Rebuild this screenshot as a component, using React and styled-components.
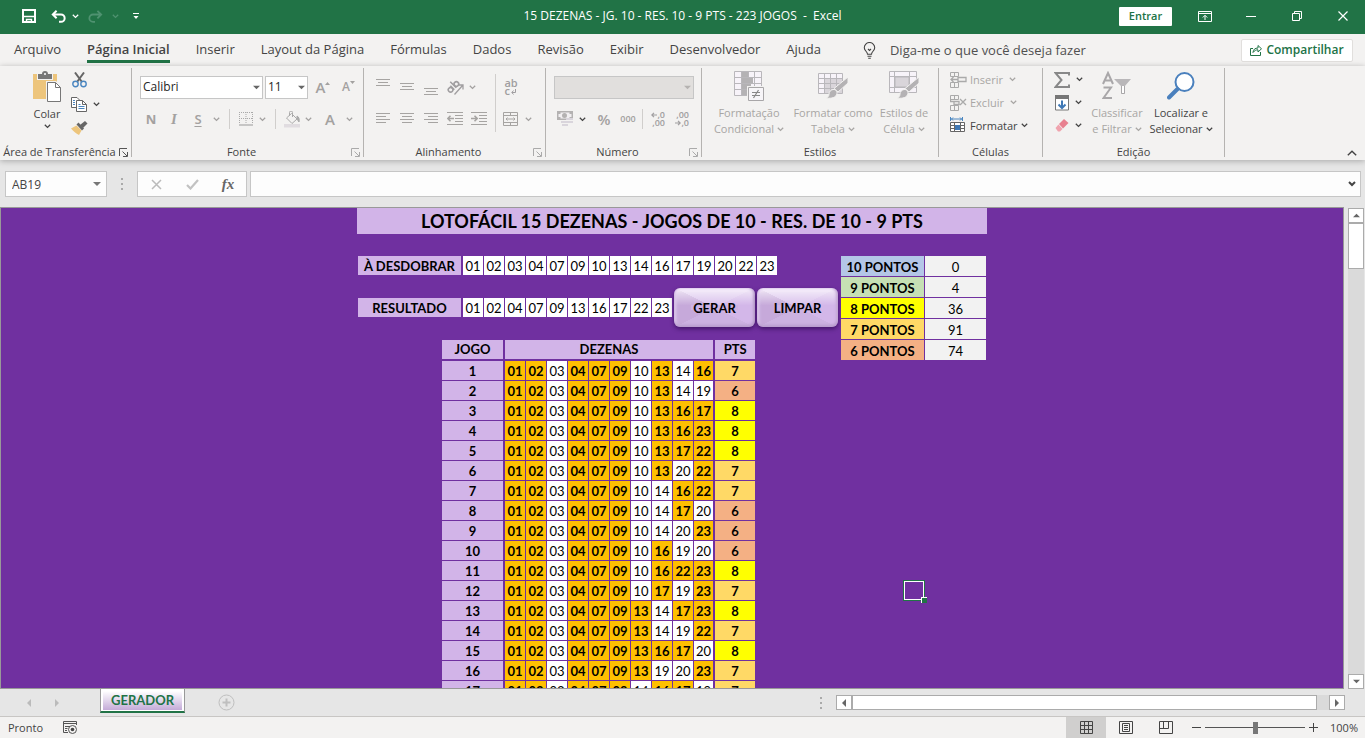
import React from "react";
import styled, { createGlobalStyle, css } from "styled-components";

const green = "#217346";
const purple = "#7030a0";
const lilac = "#d2b4e8";
const ui = '"Open Sans", "Noto Sans", sans-serif';
const sheetFont = 'Lato, "Open Sans", sans-serif';

const Global = createGlobalStyle`
  *, *::before, *::after { box-sizing: border-box; }
  body { margin: 0; background: #e6e6e6; color: #444; font: 12px/16px ${ui}; }
  button, input, select { font: inherit; color: inherit; margin: 0; padding: 0; border: 0; border-radius: 0; background: none; }
  svg { display: block; flex: none; }
`;

const Window = styled.div`
  height: 100vh;
  display: flex;
  flex-direction: column;
  overflow: hidden;
`;

/* ---------- title bar ---------- */
const TitleBar = styled.header`
  flex: none;
  height: 34px;
  display: grid;
  grid-template-columns: 1fr auto 1fr;
  align-items: center;
  padding-bottom: 2px;
  background: ${green};
  color: #fff;
`;
const QuickAccess = styled.div`
  display: flex;
  align-items: center;
  padding-left: 14px;
`;
const IconButton = styled.button`
  display: flex;
  align-items: center;
  justify-content: center;
  width: ${(p) => p.$w || 24}px;
  height: ${(p) => p.$h || 24}px;
  flex: none;
  color: ${(p) => p.$c || "inherit"};
`;
const DocTitle = styled.h1`
  margin: 0;
  font-size: 12px;
  font-weight: 400;
  white-space: pre;
`;
const WindowTools = styled.div`
  display: flex;
  align-items: center;
  justify-content: flex-end;
`;
const SignIn = styled.button`
  width: 53px;
  height: 19px;
  margin-right: 9px;
  border-radius: 1px;
  background: #fff;
  color: ${green};
  font-size: 11px;
  font-weight: 600;
`;

/* ---------- ribbon tabs ---------- */
const TabBar = styled.nav`
  flex: none;
  height: 32px;
  display: flex;
  align-items: center;
  gap: 26px;
  padding: 0 12px 0 14px;
  background: #f3f2f1;
  font-size: 13px;
`;
const Tab = styled.button`
  height: 25px;
  line-height: 22px;
  border-bottom: 3px solid transparent;
  white-space: nowrap;
  ${(p) => p.$on && css`
    border-color: ${green};
    font-weight: 600;
  `}
`;
const TellMe = styled.label`
  display: flex;
  align-items: center;
  gap: 14px;
  flex: 1;
  margin-left: 16px;
  input { flex: 1; min-width: 0; height: 20px; outline: 0; }
  input::placeholder { color: #505050; opacity: 1; }
`;
const Share = styled.button`
  display: flex;
  align-items: center;
  justify-content: center;
  gap: 4px;
  width: 112px;
  height: 23px;
  border: 1px solid #e1dfdd;
  border-radius: 2px;
  background: #fff;
  color: ${green};
  font-size: 12px;
  font-weight: 600;
`;

/* ---------- ribbon ---------- */
const Ribbon = styled.div`
  flex: none;
  height: 94px;
  display: flex;
  background: #f3f2f1;
  position: relative;
  box-shadow: 0 1px 6px rgba(0, 0, 0, 0.28);
`;
const Group = styled.section`
  width: ${(p) => p.$w}px;
  flex: none;
  height: 89px;
  margin-top: 2px;
  border-right: 1px solid #b5b3b1;
  display: flex;
  flex-direction: column;
  font-size: 11px;
`;
const GroupBody = styled.div`
  flex: 1;
  display: flex;
  padding-left: ${(p) => p.$pl || 0}px;
`;
const GroupLabel = styled.div`
  height: 16px;
  margin-bottom: -3px;
  display: flex;
  align-items: center;
  span { flex: 1; text-align: center; white-space: nowrap; }
`;
const Launcher = styled.button`
  width: 12px;
  height: 12px;
  color: ${(p) => (p.$on ? "#555" : "#aaa")};
`;
const Stack = styled.div`
  display: flex;
  flex-direction: column;
  padding-top: ${(p) => p.$pt || 0}px;
`;
const Line = styled.div`
  display: flex;
  align-items: center;
  height: ${(p) => p.$h || 32}px;
`;
const Big = styled.button`
  display: flex;
  flex-direction: column;
  align-items: center;
  justify-content: flex-start;
  width: ${(p) => p.$w}px;
  height: 72px;
  padding-top: 3px;
  color: ${(p) => (p.$off ? "#a8a6a4" : "#444")};
  white-space: nowrap;
  > svg:first-child { margin-bottom: 4px; }
  > svg:last-child { margin-top: 2px; }
  span { display: flex; align-items: center; gap: 3px; height: 16px; flex: none; }
`;
const Small = styled.button`
  display: flex;
  align-items: center;
  gap: 3px;
  height: 23px;
  color: ${(p) => (p.$off ? "#a8a6a4" : "#444")};
`;
const Letter = styled.span`
  font-size: ${(p) => p.$s || 13}px;
  font-weight: ${(p) => p.$b || 400};
  font-style: ${(p) => (p.$i ? "italic" : "normal")};
  font-family: ${(p) => (p.$i ? '"Liberation Serif", serif' : "inherit")};
  text-decoration: ${(p) => (p.$u ? "underline" : "none")};
  text-underline-offset: 2px;
`;
const Divider = styled.i`
  width: 1px;
  height: ${(p) => p.$h || 20}px;
  margin: 0 ${(p) => p.$m || 0}px;
  background: #d0cecc;
`;
const Combo = styled.div`
  display: grid;
  width: ${(p) => p.$w}px;
  height: 23px;
  margin-right: 2px;
  align-items: center;
  border: 1px solid #c6c6c6;
  background: ${(p) => (p.$off ? "#e1dfdd" : "#fff")};
  color: #262626;
  font-size: 12px;
  select, > svg { grid-area: 1 / 1; }
  select { appearance: none; width: 100%; height: 21px; padding-left: 2px; outline: 0; }
  > svg { justify-self: end; margin-right: 2px; pointer-events: none; color: ${(p) => (p.$off ? "#b5b3b1" : "#666")}; }
`;
const Spacer = styled.i`
  flex: 1;
`;
const Collapse = styled(IconButton)`
  align-self: flex-end;
  margin-right: 1px;
`;

/* ---------- formula bar ---------- */
const FormulaBar = styled.div`
  flex: none;
  height: 47px;
  display: flex;
  padding: 11px 4px 10px 5px;
`;
const Box = styled.div`
  display: flex;
  align-items: center;
  height: 26px;
  border: 1px solid #c6c6c6;
  background: #fdfdfd;
  width: ${(p) => (p.$w ? p.$w + "px" : "auto")};
  flex: ${(p) => (p.$w ? "none" : 1)};
  input { flex: 1; min-width: 0; height: 24px; padding-left: 6px; outline: 0; }
`;
const Grip = styled.div`
  width: ${(p) => p.$w || 30}px;
  display: flex;
  justify-content: center;
  align-items: center;
  color: #aaa;
`;

/* ---------- sheet ---------- */
const Middle = styled.main`
  flex: 1;
  min-height: 0;
  display: flex;
`;
const Sheet = styled.div`
  flex: 1;
  min-width: 0;
  overflow: hidden;
  border: 1px solid #999;
  background: ${purple};
  color: #000;
  font: 13px/17px ${sheetFont};
`;
const Canvas = styled.div`
  position: relative;
  width: 630px;
  margin: 0 auto;
`;
const Banner = styled.h2`
  margin: 0 0 22px;
  height: 26px;
  background: ${lilac};
  font-size: 18px;
  line-height: 27px;
  font-weight: 700;
  text-align: center;
  white-space: nowrap;
`;
const Columns = styled.div`
  display: flex;
  justify-content: space-between;
  align-items: flex-start;
  padding-left: 1px;
`;
const Draw = styled.div`
  display: flex;
  align-items: center;
  height: 19px;
  margin-bottom: 23px;
`;
const DrawLabel = styled.strong`
  width: 103px;
  height: 19px;
  padding-top: 2px;
  margin-right: 2px;
  background: ${lilac};
  text-align: center;
`;
const Numbers = styled.div`
  display: flex;
  gap: 1px;
  span { width: 20px; height: 19px; padding-top: 2px; background: #fff; text-align: center; }
`;
const Bevel = styled.button`
  width: 81px;
  height: 39px;
  padding-top: 2px;
  margin-left: 2px;
  border-radius: 6px;
  background:
    linear-gradient(rgba(255, 255, 255, 0.75), rgba(255, 255, 255, 0) 45%),
    linear-gradient(#cfb3e4, #cfb3e4) center / 47px 5px no-repeat,
    conic-gradient(from -64deg, #d9c1ec 0 128deg, #d3b7e9 0 180deg, #ccb2e1 0 308deg, #c6a9da 0);
  box-shadow: inset 0 -2px 3px #b79bcc, inset 2px 0 3px #e3cff2, inset -2px 0 3px #c3a8d6, inset 0 2px 3px #fbf4ff, 0 2px 4px rgba(30, 0, 60, 0.55);
  font-weight: 700;
`;
const Grid = styled.table`
  border-spacing: 0;
  table-layout: fixed;
  text-align: center;
  th, td { padding: 0; border: 0 solid ${purple}; border-width: 0 1px 1px 0; }
`;
const Games = styled(Grid)`
  width: 314px;
  margin-left: 84px;
  tr { height: 20px; }
  th { background: ${lilac}; border-right-width: 2px; }
  thead th { height: 21px; border-bottom-width: 2px; }
  thead th:last-child { border-right-width: 1px; }
  tbody th, tbody td { padding-top: 2px; }
  td:nth-child(11) { border-right-width: 2px; }
`;
const Num = styled.td`
  background: ${(p) => (p.$hit ? "#ffc000" : "#fff")};
  font-weight: ${(p) => (p.$hit ? 700 : 400)};
`;
const Pts = styled.td`
  background: ${(p) => ({ 6: "#f4b084", 7: "#ffd966", 8: "#ffff00" }[p.$v])};
  font-weight: 700;
`;
const Points = styled(Grid)`
  width: 146px;
  tr { height: 21px; }
  th { width: 84px; }
  th, td { padding-top: 2px; }
  td { background: #f2f2f2; }
`;
const PointsLabel = styled.th`
  background: ${(p) => p.$c};
`;
const Cursor = styled.div`
  position: absolute;
  left: 546px;
  top: 372px;
  width: 22px;
  height: 21px;
  border: 1px solid ${green};
  box-shadow: inset 0 0 0 1px #fff;
  &::after {
    content: "";
    position: absolute;
    right: -3px;
    bottom: -3px;
    width: 6px;
    height: 6px;
    background: ${green};
    border-left: 1px solid #fff;
    border-top: 1px solid #fff;
  }
`;
const VScroll = styled.div`
  width: 21px;
  flex: none;
  display: flex;
  flex-direction: column;
  padding: 1px 1px 0 4px;
  > div { flex: 1; background: #dadada; }
  > div > i { display: block; height: 46px; background: #fff; border: 1px solid #ababab; }
`;
const ScrollButton = styled.button`
  flex: none;
  width: 16px;
  height: 15px;
  display: flex;
  align-items: center;
  justify-content: center;
  border: 1px solid #ababab;
  background: #fff;
  color: #666;
`;

/* ---------- sheet tabs and status ---------- */
const SheetTabs = styled.div`
  flex: none;
  height: 27px;
  display: flex;
  align-items: center;
  padding: 0 20px;
`;
const SheetTab = styled.button`
  align-self: flex-start;
  width: 85px;
  height: 24px;
  margin: 0 29px 0 24px;
  border: 1px solid #999;
  border-top: 0;
  border-bottom: 2px solid ${green};
  padding: 0 2px 1px;
  background: #fff;
  color: ${green};
  font: 700 13px/19px ${sheetFont};
  span { display: block; padding-top: 2px; background: linear-gradient(#fff 10%, #c4abd8); }
`;
const HScroll = styled.div`
  display: flex;
  flex: none;
  width: 509px;
  > div { flex: 1; background: #dadada; }
  > div > i { display: block; height: 15px; width: 465px; background: #fff; border: 1px solid #ababab; }
`;
const TabsGrip = styled(Grip)`
  margin-left: auto;
`;
const Status = styled.footer`
  flex: none;
  height: 22px;
  display: flex;
  align-items: center;
  gap: 20px;
  padding: 0 7px 0 8px;
  border-top: 1px solid #c8c6c4;
  background: #f3f2f1;
  font-size: 11px;
`;
const Views = styled.div`
  display: flex;
  margin-left: auto;
`;
const View = styled(IconButton)`
  background: ${(p) => (p.$on ? "#d0cfce" : "none")};
`;
const Zoom = styled.label`
  display: flex;
  align-items: center;
  gap: 4px;
  margin: 0 -8px 0 -14px;
  input { appearance: none; width: 100px; height: 12px; outline: 0; background: linear-gradient(#555, #555) center / 100% 1px no-repeat; }
  input::-webkit-slider-thumb { appearance: none; width: 5px; height: 12px; background: #777; }
`;

/* ---------- drawings ---------- */
const Svg = ({ w, h = w, children, ...rest }) => (
  <svg width={w} height={h} viewBox={`0 0 ${w} ${h}`} fill="none" stroke="currentColor" aria-hidden="true" {...rest}>
    {children}
  </svg>
);
const Chev = ({ c }) => (
  <Svg w={7} h={5} stroke={c || "currentColor"} strokeWidth="1.3"><path d="M.8.8 3.5 3.4 6.2.8" /></Svg>
);
const Tri = ({ d = "down", s = 8 }) => (
  <Svg w={s} viewBox="0 0 8 8" stroke="none" fill="currentColor">
    <path d={{ down: "M0 2h8L4 6z", up: "M0 6h8L4 2z", left: "M6 0v8L2 4z", right: "M2 0v8l4-4z" }[d]} />
  </Svg>
);
const Save = () => (
  <Svg w={14}><path d="M1 1h12v12H1z" strokeWidth="2" /><path d="M1 7.500h12M4.500 14v-3.500h5V14" strokeWidth="1.400" /><path d="M5 12h2v2H5z" fill="currentColor" stroke="none" /></Svg>
);
const Undo = () => (
  <Svg w={15} h={13} strokeWidth="2"><path d="M1.5 4.5H10a3.6 3.6 0 0 1 0 7.3H8M5.6.8 1.8 4.5l3.8 3.8" /></Svg>
);
const Redo = () => (
  <Svg w={15} h={13} strokeWidth="1.8"><path d="M13.5 4.5H5a3.6 3.6 0 0 0 0 7.3h2M9.4.8l3.8 3.7-3.8 3.8" /></Svg>
);
const Customize = () => (
  <Svg w={6} h={8}><path d="M0 1.5h6" /><path d="M.5 4h5L3 7z" fill="currentColor" stroke="none" /></Svg>
);
const RibbonDisplay = () => (
  <Svg w={14} h={11}><path d="M.5.5h13v10H.5zM.5 2.5h13M7 9V4.5M4.8 6.5 7 4.3l2.2 2.2" /></Svg>
);
const Minimize = () => <Svg w={10}><path d="M0 5.5h10" /></Svg>;
const Restore = () => <Svg w={10}><path d="M.5 2.5h7v7h-7zM2.5 2V.5h7v7H8" /></Svg>;
const Close = () => <Svg w={10}><path d="m.5.5 9 9m0-9-9 9" strokeWidth="1.2" /></Svg>;
const Bulb = () => (
  <Svg w={13} h={17} strokeWidth="1.1"><path d="M4.5 12.2C4.5 9.6 1.3 8.8 1.3 5.7a5.2 5.2 0 0 1 10.4 0c0 3.1-3.2 3.9-3.2 6.5zM4.5 14.3h4M5.2 16.2h2.6M5 7l1.5 1.5L8 7" /></Svg>
);
const ShareIcon = () => (
  <Svg w={12}><path d="M3 4.5H.5v7h10V8M3 8.5C3.2 5.5 5 4 8 4V1.5l3.5 3.3L8 8V5.800C6 5.800 4.500 6.500 3 8.500z" /></Svg>
);
const Paste = () => (
  <Svg w={28} h={31} stroke="none">
    <path d="M0 3h24v25H0z" fill="#edc57c" />
    <path d="M4 1h16v8H4z" fill="#f3f2f1" />
    <path d="M5 8V3h4a3 3 0 0 1 6 0h4v5z" fill="#777" /><circle cx="12" cy="3" r="1" fill="#fff" />
    <path d="M13 10h10l6 6v15H13z" fill="#f3f2f1" />
    <path d="M14.5 11.5h8l5 5v14h-13z" fill="#fff" stroke="#777" /><path d="M22.5 11.5v5h5" stroke="#777" />
  </Svg>
);
const Cut = () => (
  <Svg w={15} h={16}><path d="M3 .5 10 10M12 .5 5 10" stroke="#666" strokeWidth="2" /><circle cx="3.5" cy="12" r="2.700" stroke="#4a86c0" strokeWidth="1.400" /><circle cx="11.5" cy="12" r="2.700" stroke="#4a86c0" strokeWidth="1.400" /></Svg>
);
const Copy = () => (
  <Svg w={16} h={15} stroke="#666">
    <path d="M5 10.5H.5v-10H6l2.5 2.5" fill="#fff" /><path d="M5.500 3.500h6l4 4v7h-10z" fill="#fff" /><path d="M11.500 3.500v4h4" />
    <path d="M2 3.500h2M2 5.500h2M2 7.500h2M7.500 7.500h2M7.500 9.500h6M7.500 11.500h6" stroke="#4a86c0" />
  </Svg>
);
const Brush = () => (
  <Svg w={17} h={15} stroke="none"><path d="M0 7.500 5.500 4.500l5 5L8 14c-3-1.500-5.500-3.500-8-6.500z" fill="#edc57c" /><path d="m5.500 3.500 2-2L13 7.500l-2 2z" fill="#666" /><path d="m9 4 5-4 2.500 2.500L12 7z" fill="#666" /></Svg>
);
const LauncherIcon = () => (
  <Svg w={9}><path d="M.5 8V.5H8M3.500 3.500 8 8M8.500 4v4.500H4" /></Svg>
);
const SizeArrow = ({ up }) => (
  <Svg w={6} h={14} stroke="none" fill="currentColor"><path d={up ? "M0 5h5L2.500 2z" : "M0 1h5L2.500 4z"} /></Svg>
);
const Borders = () => (
  <Svg w={14} stroke="#aaa"><path d="M.5 0v12M13.500 0v12M0 .5h14M7 0v12M0 6.500h14" strokeDasharray="1 1" /><path d="M0 13h14" stroke="#999" /></Svg>
);
const Fill = () => (
  <Svg w={17} h={17} stroke="#aaa"><path d="M0 13h16v3.500H0z" fill="#e0dce0" stroke="none" /><path d="M7.500 2.500 13 8l-5 4.500L2.500 7zM5.500 5V1.500a1.500 1.500 0 0 1 3 0V6" /><path d="M13 5c2 1 2.500 3 2 6l-2-3z" fill="#aaa" /></Svg>
);
const Align = ({ a = "center" }) => (
  <Svg w={14} h={12} stroke="#a6a4a2">
    {[14, 10, 14, 10].map((len, i) => (
      <path key={i} d={`M${a === "left" ? 0 : a === "right" ? 14 - len : (14 - len) / 2} ${i * 3 + 0.5}h${len}`} />
    ))}
  </Svg>
);
const VAlign = ({ y }) => (
  <Svg w={14} h={17} stroke="#a6a4a2"><path d={`M0 ${y + 0.5}h14M2 ${y + 3.5}h10M0 ${y + 6.5}h14`} /></Svg>
);
const Orient = () => (
  <Svg w={17} h={16} stroke="#a09ea0">
    <g transform="rotate(-45 5 8)" strokeWidth="1.600"><circle cx="2" cy="9" r="2.300" /><path d="M4.700 6v5.600M7.500 3v8.600" /><circle cx="10.200" cy="9" r="2.300" /></g>
    <path d="m7.500 15.500 8-9M11.500 6h4.500v4.500" strokeWidth="1.300" />
  </Svg>
);
const Indent = ({ out }) => (
  <Svg w={16} h={14} stroke="#a6a4a2"><path d="M0 .5h16M8 3.500h8M8 6.500h8M8 9.500h8M0 12.500h16" /><path d={out ? "M7 6.500H1M3.500 3.800.8 6.500l2.700 2.700" : "M0 6.500h6M3.500 3.800l2.700 2.700-2.700 2.700"} strokeWidth="1.600" /></Svg>
);
const WrapText = styled.span`
  display: flex;
  flex-direction: column;
  color: #a09ea0;
  font-size: 11px;
  line-height: 8px;
  font-weight: 600;
  text-align: left;
  span { display: flex; align-items: flex-end; gap: 1px; }
`;
const Return = () => <Svg w={5} h={6}><path d="M4.500 0v3.500H1M2.500 1.500.8 3.500l1.700 2" /></Svg>;
const Merge = () => (
  <Svg w={16} h={15} stroke="#a6a4a2"><path d="M.5.5h14v13H.5zM.5 3.500h14M.5 10.500h14M7.500.5v3M7.500 10.500v3M3 7h9M4.500 5.500 3 7l1.500 1.500M10.500 5.500 12 7l-1.500 1.500" /></Svg>
);
const Money = () => (
  <Svg w={17} h={16} stroke="none"><path d="M0 0h16v9H0z" fill="#b4b2b2" /><path d="M1.500 3h2v-1.500h9V3h2v3h-2v1.500h-9V6h-2z" fill="#f1eff1" /><circle cx="7.500" cy="4.500" r="2.500" fill="#b4b2b2" /><path d="M4 10h6v2H4zM5 13h6v2H5zM9 7h7v2H9zM9 10h7v2H9z" fill="#d9d5dc" /></Svg>
);
const Decimals = styled.span`
  display: block;
  width: 16px;
  color: #a09ea0;
  font-size: 9px;
  line-height: 8px;
  font-weight: 600;
  span { display: flex; justify-content: flex-end; align-items: center; }
`;
const MiniArrow = ({ right }) => (
  <Svg w={6} h={6}><path d={right ? "M0 3h5M3 .8 5.2 3 3 5.2" : "M6 3H1M3 .8.8 3 3 5.2"} strokeWidth="1.200" /></Svg>
);
const CondFormat = () => (
  <Svg w={31} h={30} stroke="#b9b7bb"><path d="M.5.5h27v24H.5z" fill="#f7f3f9" /><path d="M.5 6.500h27M.5 12.500h27M.5 18.500h27M7.500.5v24M14.500.5v24M20.500.5v24" /><path d="M8 1h6v5H8zM8 7h11v5H8zM8 13h9v5H8zM8 19h5v5H8z" fill="#b4b2b4" stroke="none" /><path d="M13 15h18v15H13z" fill="#f3f2f1" stroke="none" /><path d="M14.500 16.500h15v13h-15z" fill="#f7f5f8" stroke="#a8a6a8" /><path d="M18 21.500h8M18 24.500h8M24.500 19l-5 8" stroke="#888" strokeWidth="1.200" /></Svg>
);
const PaintBrush = ({ x }) => (
  <g transform={`translate(${x} 6)`} stroke="#f3f2f1" fill="#b4b2b4"><path d="M22 0v6L12 15l-4-3.500z" /><path d="M7 12.500c3-.5 5 2.500 3.500 5.500-2 3.500-7 3.500-10.500 3 2-.5 3-2 3-4s1.500-4 4-4.500z" /></g>
);
const TableFormat = () => (
  <Svg w={31} h={30} stroke="#b9b7bb"><path d="M.5 2.500h24v20H.5z" fill="#f7f3f9" /><path d="M7 8h17v14H7z" fill="#d9d5da" stroke="none" /><path d="M.5 7.500h24M.5 12.500h24M.5 17.500h24M6.500 2.500v20M12.500 2.500v20M18.500 2.500v20" /><PaintBrush x={8} /></Svg>
);
const CellStyle = () => (
  <Svg w={31} h={30} stroke="#b9b7bb"><path d="M.5.5h27v21H.5z" fill="#f7f3f9" /><path d="M.5 5.500h27M.5 16.500h27M5.500.5v21M20.500.5v21" /><path d="M6 6h14v10H6z" fill="#d9d5da" /><PaintBrush x={8} /></Svg>
);
const CellsIns = ({ del }) => (
  <Svg w={17} h={16} stroke="#aaa"><path d="M.5.5h8v4h-8zM4.500.5v4M.5 10.500h8v5h-8zM4.500 10.500v5" />{del ? <path d="M.5 4v2.500h3M4 6.500h5v3H4zM10 4l6 6m0-6-6 6" strokeWidth="1.300" /> : <path d="M8 5.500h8v4H8zM8 7.500H1M3.500 5 1 7.500 3.500 10" strokeWidth="1.300" />}</Svg>
);
const CellsFmt = () => (
  <Svg w={17} h={17} stroke="#666"><path d="M.5 5.500h14v9H.5zM.5 8.500h14M.5 11.500h14M4.500 5.500v9M10.500 5.500v9" fill="#fff" /><path d="M5 8h5v5H5z" fill="#3f78b5" stroke="none" /><path d="M.5 0v4M12.500 0v4M1 2h11M3 .5 1.500 2 3 3.500M10 .5 11.500 2 10 3.500" stroke="#4a86c0" /></Svg>
);
const Sigma = () => <Svg w={16} h={16} stroke="#888" strokeWidth="2"><path d="M15 3.500V1H1.500l6 7-6 7H15v-2.500" /></Svg>;
const FillDown = () => (
  <Svg w={14} h={16} stroke="#777"><path d="M.5.5h13v14.500H.5z" fill="#fff" /><path d="M0 0h14v4H0z" fill="#777" stroke="none" /><path d="M7 5.500V13M3.500 9.500 7 13l3.500-3.500" stroke="#3f78b5" strokeWidth="2" /></Svg>
);
const Eraser = () => <Svg w={14} h={13} stroke="none"><path d="m4 5 5-5 4.500 4L8 9.500z" fill="#e8808f" /><path d="m3.500 5.500 4 4.500-2.500 2.500H3L.5 9z" fill="#f0a3ae" /></Svg>;
const SortFilter = () => (
  <Svg w={30} h={30} stroke="#a9a7a9"><path d="m1 13 5-11 5 11M3 9.500h6M1.500 16.500H9l-7.500 10.500h8.500" strokeWidth="2" /><path d="M12 8h17l-6.500 7.500V23h-3v-7.500z" fill="#b9b7b9" stroke="none" /><path d="M19.500 15v7.500h3V15" fill="#fff" /></Svg>
);
const Find = () => <Svg w={28} h={30} stroke="#4a80bd"><circle cx="17.500" cy="11" r="9" fill="#fff" strokeWidth="2" /><path d="M10.500 18 2 26.500" strokeWidth="4" strokeLinecap="round" /></Svg>;
const X = () => <Svg w={11} stroke="#bbb" strokeWidth="1.500"><path d="m1 1 9 9m0-9-9 9" /></Svg>;
const Check = () => <Svg w={13} h={11} stroke="#c2c2c2" strokeWidth="2.200"><path d="m1 6 3.500 3.500L12 1" /></Svg>;
const Dots = () => <Svg w={3} h={12} fill="#aaa" stroke="none"><path d="M0 0h2v2H0zM0 5h2v2H0zM0 10h2v2H0z" /></Svg>;
const Plus = () => <Svg w={17} stroke="#bfbfbf"><circle cx="8.500" cy="8.500" r="7.500" /><path d="M8.500 4.500v8M4.500 8.500h8" strokeWidth="2" /></Svg>;
const Macro = () => <Svg w={15} h={13} stroke="#555"><path d="M5 11.500H.5V.5h13V4M.5 2.500h13M2 5.500h5M2 7.500h2.500M2 9.500h2" /><circle cx="9.500" cy="8.500" r="4" /><circle cx="9.500" cy="8.500" r="1.800" fill="#444" stroke="none" /></Svg>;
const ViewGrid = () => <Svg w={13} stroke="#444"><path d="M.5.5h12v12H.5zM.5 4.500h12M.5 8.500h12M4.500.5v12M8.500.5v12" /></Svg>;
const ViewPage = () => <Svg w={14} h={13} stroke="#444"><path d="M.5.5h13v12H.5zM3.500 2.500h7v8h-7zM5 4.500h4M5 6.500h4M5 8.500h4" /></Svg>;
const ViewBreak = () => <Svg w={14} h={13} stroke="#444"><path d="M.5.5h13v12H.5zM4.500.5v7M9.500.5v7M.5 7.500h9" /></Svg>;

/* ---------- data ---------- */
const tabs = ["Arquivo", "Página Inicial", "Inserir", "Layout da Página", "Fórmulas", "Dados", "Revisão", "Exibir", "Desenvolvedor", "Ajuda"];
const pool = "01 02 03 04 07 09 10 13 14 16 17 19 20 22 23".split(" ");
const result = "01 02 04 07 09 13 16 17 22 23".split(" ");
const games = [
  "10 13 14 16", "10 13 14 19", "10 13 16 17", "10 13 16 23", "10 13 17 22", "10 13 20 22", "10 14 16 22", "10 14 17 20",
  "10 14 20 23", "10 16 19 20", "10 16 22 23", "10 17 19 23", "13 14 17 23", "13 14 19 22", "13 16 17 20", "13 19 20 23", "14 16 17 19",
].map((s) => ("01 02 03 04 07 09 " + s).split(" "));
const points = [["10 PONTOS", 0, "#b4c6e7"], ["9 PONTOS", 4, "#c6e0b4"], ["8 PONTOS", 36, "#ffff00"], ["7 PONTOS", 91, "#ffd966"], ["6 PONTOS", 74, "#f4b084"]];

const RibbonGroup = ({ w, pl, label, launcher, on, children }) => (
  <Group $w={w} aria-label={label}>
    <GroupBody $pl={pl}>{children}</GroupBody>
    <GroupLabel>
      <span>{label}</span>
      {launcher && <Launcher $on={on} aria-label={`Opções de ${label}`}><LauncherIcon /></Launcher>}
    </GroupLabel>
  </Group>
);
const Tool = ({ w, h, c, label, children }) => (
  <IconButton $w={w} $h={h} $c={c} aria-label={label}>{children}</IconButton>
);
const dim = "#a3a1a0";

export default function App() {
  return (
    <Window>
      <Global />
      <TitleBar>
        <QuickAccess>
          <Tool w={30} label="Salvar"><Save /></Tool>
          <Tool w={28} label="Desfazer"><Undo /></Tool>
          <Tool w={6} label="Opções de desfazer"><Chev c="#fff" /></Tool>
          <Tool w={34} c="#4f9270" label="Refazer"><Redo /></Tool>
          <Tool w={6} c="#4f9270" label="Opções de refazer"><Chev /></Tool>
          <Tool w={36} label="Personalizar"><Customize /></Tool>
        </QuickAccess>
        <DocTitle>{"15 DEZENAS - JG. 10 - RES. 10 - 9 PTS - 223 JOGOS  -  Excel"}</DocTitle>
        <WindowTools>
          <SignIn>Entrar</SignIn>
          <Tool w={47} label="Opções de exibição"><RibbonDisplay /></Tool>
          <Tool w={46} label="Minimizar"><Minimize /></Tool>
          <Tool w={46} label="Restaurar"><Restore /></Tool>
          <Tool w={45} label="Fechar"><Close /></Tool>
        </WindowTools>
      </TitleBar>

      <TabBar>
        {tabs.map((t, i) => <Tab key={t} $on={i === 1}>{t}</Tab>)}
        <TellMe><Bulb /><input aria-label="Diga-me" placeholder="Diga-me o que você deseja fazer" /></TellMe>
        <Share><ShareIcon />Compartilhar</Share>
      </TabBar>

      <Ribbon>
        <RibbonGroup w={132} pl={28} label="Área de Transferência" launcher on>
          <Big $w={38}><Paste /><span>Colar</span><Chev /></Big>
          <Stack>
            <Line $h={24}><Tool w={26} label="Recortar"><Cut /></Tool></Line>
            <Line $h={24}><Tool w={26} label="Copiar"><Copy /></Tool><Tool w={8} label="Opções de copiar"><Chev /></Tool></Line>
            <Line $h={24}><Tool w={26} label="Pincel"><Brush /></Tool></Line>
          </Stack>
        </RibbonGroup>

        <RibbonGroup w={232} pl={8} label="Fonte" launcher>
          <Stack $pt={3}>
            <Line>
              <Combo $w={123}><select aria-label="Fonte"><option>Calibri</option></select><Tri s={7} /></Combo>
              <Combo $w={43}><select aria-label="Tamanho"><option>11</option></select><Tri s={7} /></Combo>
              <Tool w={27} c={dim} label="Aumentar"><Letter $s={15} $b={600}>A</Letter><SizeArrow up /></Tool>
              <Tool w={24} c={dim} label="Diminuir"><Letter $s={12} $b={600}>A</Letter><SizeArrow /></Tool>
            </Line>
            <Line>
              <Tool w={22} c={dim} label="Negrito"><Letter $b={700}>N</Letter></Tool>
              <Tool w={24} c={dim} label="Itálico"><Letter $i $s={15} $b={700}>I</Letter></Tool>
              <Tool w={24} c={dim} label="Sublinhado"><Letter $b={600} $u>S</Letter></Tool>
              <Tool w={12} c={dim} label="Opções"><Chev /></Tool>
              <Divider $m={7} />
              <Tool w={18} label="Bordas"><Borders /></Tool>
              <Tool w={14} c={dim} label="Opções"><Chev /></Tool>
              <Divider $m={6} />
              <Tool w={20} label="Preenchimento"><Fill /></Tool>
              <Tool w={12} c={dim} label="Opções"><Chev /></Tool>
              <Tool w={32} c={dim} label="Cor da fonte"><Letter $s={15} $b={600}>A</Letter></Tool>
              <Tool w={6} c={dim} label="Opções"><Chev /></Tool>
            </Line>
          </Stack>
        </RibbonGroup>

        <RibbonGroup w={182} pl={7} label="Alinhamento" launcher>
          <Stack $pt={3}>
            <Line>
              <Tool label="Em cima"><VAlign y={0} /></Tool>
              <Tool label="No meio"><VAlign y={4} /></Tool>
              <Tool label="Embaixo"><VAlign y={9} /></Tool>
              <Tool label="Orientação"><Orient /></Tool>
              <Tool w={10} c={dim} label="Opções"><Chev /></Tool>
            </Line>
            <Line>
              <Tool label="Esquerda"><Align a="left" /></Tool>
              <Tool label="Centro"><Align /></Tool>
              <Tool label="Direita"><Align a="right" /></Tool>
              <Tool label="Diminuir recuo"><Indent out /></Tool>
              <Tool label="Aumentar recuo"><Indent /></Tool>
            </Line>
          </Stack>
          <Stack $pt={6}><Divider $h={58} $m={4} /></Stack>
          <Stack $pt={3}>
            <Line><Tool w={22} label="Quebrar texto"><WrapText><span>ab</span><span>c<Return /></span></WrapText></Tool></Line>
            <Line><Tool w={22} label="Mesclar"><Merge /></Tool><Tool w={12} c={dim} label="Opções"><Chev /></Tool></Line>
          </Stack>
        </RibbonGroup>

        <RibbonGroup w={156} pl={8} label="Número" launcher>
          <Stack $pt={3}>
            <Line><Combo $w={140} $off><select disabled aria-label="Formato" /><Tri s={7} /></Combo></Line>
            <Line>
              <Tool w={22} label="Moeda"><Money /></Tool>
              <Tool w={12} label="Opções"><Chev /></Tool>
              <Tool w={32} c={dim} label="Porcentagem"><Letter $s={15} $b={600}>%</Letter></Tool>
              <Tool w={16} c={dim} label="Milhares"><Letter $s={9} $b={600}>000</Letter></Tool>
              <Divider $m={6} />
              <Tool w={16} label="Aumentar casas"><Decimals><span><MiniArrow />,0</span><span>,00</span></Decimals></Tool>
              <Tool w={32} label="Diminuir casas"><Decimals><span>,00</span><span><MiniArrow right />,0</span></Decimals></Tool>
            </Line>
          </Stack>
        </RibbonGroup>

        <RibbonGroup w={237} pl={5} label="Estilos">
          <Big $w={84} $off><CondFormat /><span>Formatação</span><span>Condicional <Chev /></span></Big>
          <Big $w={84} $off><TableFormat /><span>Formatar como</span><span>Tabela <Chev /></span></Big>
          <Big $w={58} $off><CellStyle /><span>Estilos de</span><span>Célula <Chev /></span></Big>
        </RibbonGroup>

        <RibbonGroup w={104} pl={11} label="Células">
          <Stack>
            <Small $off><CellsIns />Inserir&nbsp; <Chev /></Small>
            <Small $off><CellsIns del />Excluir&nbsp; <Chev /></Small>
            <Small><CellsFmt />Formatar <Chev /></Small>
          </Stack>
        </RibbonGroup>

        <RibbonGroup w={182} pl={8} label="Edição">
          <Stack>
            <Line $h={23}><Tool w={22} label="Soma"><Sigma /></Tool><Tool w={12} label="Opções"><Chev /></Tool></Line>
            <Line $h={23}><Tool w={22} label="Preencher"><FillDown /></Tool><Tool w={10} label="Opções"><Chev /></Tool></Line>
            <Line $h={23}><Tool w={22} label="Limpar"><Eraser /></Tool><Tool w={10} label="Opções"><Chev /></Tool></Line>
          </Stack>
          <Big $w={64} $off><SortFilter /><span>Classificar</span><span>e Filtrar <Chev /></span></Big>
          <Big $w={64}><Find /><span>Localizar e</span><span>Selecionar <Chev /></span></Big>
        </RibbonGroup>
        <Spacer />
        <Collapse $w={24} $h={14} aria-label="Recolher faixa"><Svg w={10} h={6} strokeWidth="1.400"><path d="m.8 5.2 4.2-4 4.2 4" /></Svg></Collapse>
      </Ribbon>

      <FormulaBar>
        <Box $w={102}><input aria-label="Caixa de nome" defaultValue="AB19" /><Tool w={18} c="#777" label="Nomes"><Tri /></Tool></Box>
        <Grip><Dots /></Grip>
        <Box $w={110}>
          <Tool w={36} label="Cancelar"><X /></Tool>
          <Tool w={36} label="Inserir"><Check /></Tool>
          <Tool w={36} c="#666" label="Função"><Letter $i $s={15} $b={700}>fx</Letter></Tool>
        </Box>
        <Grip $w={3} />
        <Box><input aria-label="Fórmula" /><Tool w={16} label="Expandir"><Svg w={8} h={6} strokeWidth="2"><path d="m1 1 3 3 3-3" /></Svg></Tool></Box>
      </FormulaBar>

      <Middle>
        <Sheet>
          <Canvas>
            <Banner>LOTOFÁCIL 15 DEZENAS - JOGOS DE 10 - RES. DE 10 - 9 PTS</Banner>
            <Columns>
              <div>
                <Draw>
                  <DrawLabel>À DESDOBRAR</DrawLabel>
                  <Numbers>{pool.map((n) => <span key={n}>{n}</span>)}</Numbers>
                </Draw>
                <Draw>
                  <DrawLabel>RESULTADO</DrawLabel>
                  <Numbers>{result.map((n) => <span key={n}>{n}</span>)}</Numbers>
                  <Bevel>GERAR</Bevel>
                  <Bevel>LIMPAR</Bevel>
                </Draw>
                <Games>
                  <colgroup><col width={63} />{result.map((n) => <col key={n} width={21} />)}<col width={41} /></colgroup>
                  <thead><tr><th>JOGO</th><th colSpan={10}>DEZENAS</th><th>PTS</th></tr></thead>
                  <tbody>
                    {games.map((g, i) => {
                      const hits = g.filter((n) => result.includes(n)).length;
                      return (
                        <tr key={i}>
                          <th scope="row">{i + 1}</th>
                          {g.map((n) => <Num key={n} $hit={result.includes(n)}>{n}</Num>)}
                          <Pts $v={hits}>{hits}</Pts>
                        </tr>
                      );
                    })}
                  </tbody>
                </Games>
              </div>
              <Points>
                <tbody>
                  {points.map(([l, v, c]) => <tr key={l}><PointsLabel scope="row" $c={c}>{l}</PointsLabel><td>{v}</td></tr>)}
                </tbody>
              </Points>
            </Columns>
            <Cursor />
          </Canvas>
        </Sheet>
        <VScroll>
          <ScrollButton aria-label="Para cima"><Tri d="up" s={7} /></ScrollButton>
          <div><i /></div>
          <ScrollButton aria-label="Para baixo"><Tri s={7} /></ScrollButton>
        </VScroll>
      </Middle>

      <SheetTabs>
        <Tool w={18} c="#bbb" label="Anterior"><Tri d="left" /></Tool>
        <Tool w={38} c="#bbb" label="Próxima"><Tri d="right" /></Tool>
        <SheetTab><span>GERADOR</span></SheetTab>
        <Tool w={24} label="Nova planilha"><Plus /></Tool>
        <TabsGrip><Dots /></TabsGrip>
        <HScroll>
          <ScrollButton aria-label="Para a esquerda"><Tri d="left" /></ScrollButton>
          <div><i /></div>
          <ScrollButton aria-label="Para a direita"><Tri d="right" /></ScrollButton>
        </HScroll>
      </SheetTabs>

      <Status>
        <span>Pronto</span>
        <Macro />
        <Views>
          <View $w={40} $h={21} $on aria-label="Normal"><ViewGrid /></View>
          <View $w={40} $h={21} aria-label="Layout da Página"><ViewPage /></View>
          <View $w={40} $h={21} aria-label="Quebra de página"><ViewBreak /></View>
        </Views>
        <Zoom>
          <Svg w={9}><path d="M0 4.500h9" /></Svg>
          <input type="range" min="10" max="190" defaultValue="100" aria-label="Zoom" />
          <Svg w={9}><path d="M0 4.500h9M4.500 0v9" /></Svg>
        </Zoom>
        <span>100%</span>
      </Status>
    </Window>
  );
}
